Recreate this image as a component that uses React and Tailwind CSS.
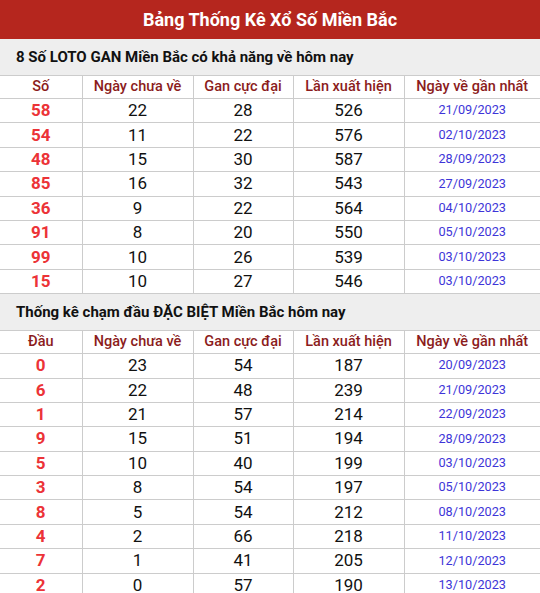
const GAN = [
  ['58', 22, 28, 526, '21/09/2023'],
  ['54', 11, 22, 576, '02/10/2023'],
  ['48', 15, 30, 587, '28/09/2023'],
  ['85', 16, 32, 543, '27/09/2023'],
  ['36', 9, 22, 564, '04/10/2023'],
  ['91', 8, 20, 550, '05/10/2023'],
  ['99', 10, 26, 539, '03/10/2023'],
  ['15', 10, 27, 546, '03/10/2023'],
];

const DAU = [
  ['0', 23, 54, 187, '20/09/2023'],
  ['6', 22, 48, 239, '21/09/2023'],
  ['1', 21, 57, 214, '22/09/2023'],
  ['9', 15, 51, 194, '28/09/2023'],
  ['5', 10, 40, 199, '03/10/2023'],
  ['3', 8, 54, 197, '05/10/2023'],
  ['8', 5, 54, 212, '08/10/2023'],
  ['4', 2, 66, 218, '11/10/2023'],
  ['7', 1, 41, 205, '12/10/2023'],
  ['2', 0, 57, 190, '13/10/2023'],
];

function StatTable({ title, first, rows }) {
  const heads = [first, 'Ngày chưa về', 'Gan cực đại', 'Lần xuất hiện', 'Ngày về gần nhất'];
  return (
    <div>
      {/* Section title */}
      <div className="flex h-[36px] items-center bg-[#eeeeee] px-4 text-[15px] font-bold text-[#111]">
        {title}
      </div>
      <table className="w-full table-fixed border-collapse text-center">
        <colgroup>
          <col className="w-[82px]" />
          <col className="w-[111px]" />
          <col className="w-[100px]" />
          <col className="w-[111px]" />
          <col />
        </colgroup>
        <thead>
          <tr className="h-[23px]">
            {heads.map((h, i) => (
              <th
                key={i}
                className="border border-[#cccccc] text-[14.5px] font-medium text-[#8b1c1c] first:border-l-0 last:border-r-0"
              >
                {h}
              </th>
            ))}
          </tr>
        </thead>
        <tbody>
          {rows.map((r) => (
            <tr key={r[0]} className="h-[24.4px]">
              <td className="border border-[#cccccc] border-l-0 text-[17px] font-bold leading-none text-[#ec3337]">{r[0]}</td>
              <td className="border border-[#cccccc] text-[17px] leading-none text-[#111]">{r[1]}</td>
              <td className="border border-[#cccccc] text-[17px] leading-none text-[#111]">{r[2]}</td>
              <td className="border border-[#cccccc] text-[17px] leading-none text-[#111]">{r[3]}</td>
              <td className="border border-[#cccccc] border-r-0 text-[12.7px] leading-none text-[#3d35d8]">{r[4]}</td>
            </tr>
          ))}
        </tbody>
      </table>
    </div>
  );
}

export default function App() {
  return (
    <div className="w-[540px] overflow-hidden bg-white font-['Roboto',sans-serif]">
      <div className="flex h-[39px] items-center justify-center bg-[#b5261e] text-[18px] font-bold text-white">
        Bảng Thống Kê Xổ Số Miền Bắc
      </div>
      <StatTable title="8 Số LOTO GAN Miền Bắc có khả năng về hôm nay" first="Số" rows={GAN} />
      <StatTable title="Thống kê chạm đầu ĐẶC BIỆT Miền Bắc hôm nay" first="Đầu" rows={DAU} />
    </div>
  );
}
